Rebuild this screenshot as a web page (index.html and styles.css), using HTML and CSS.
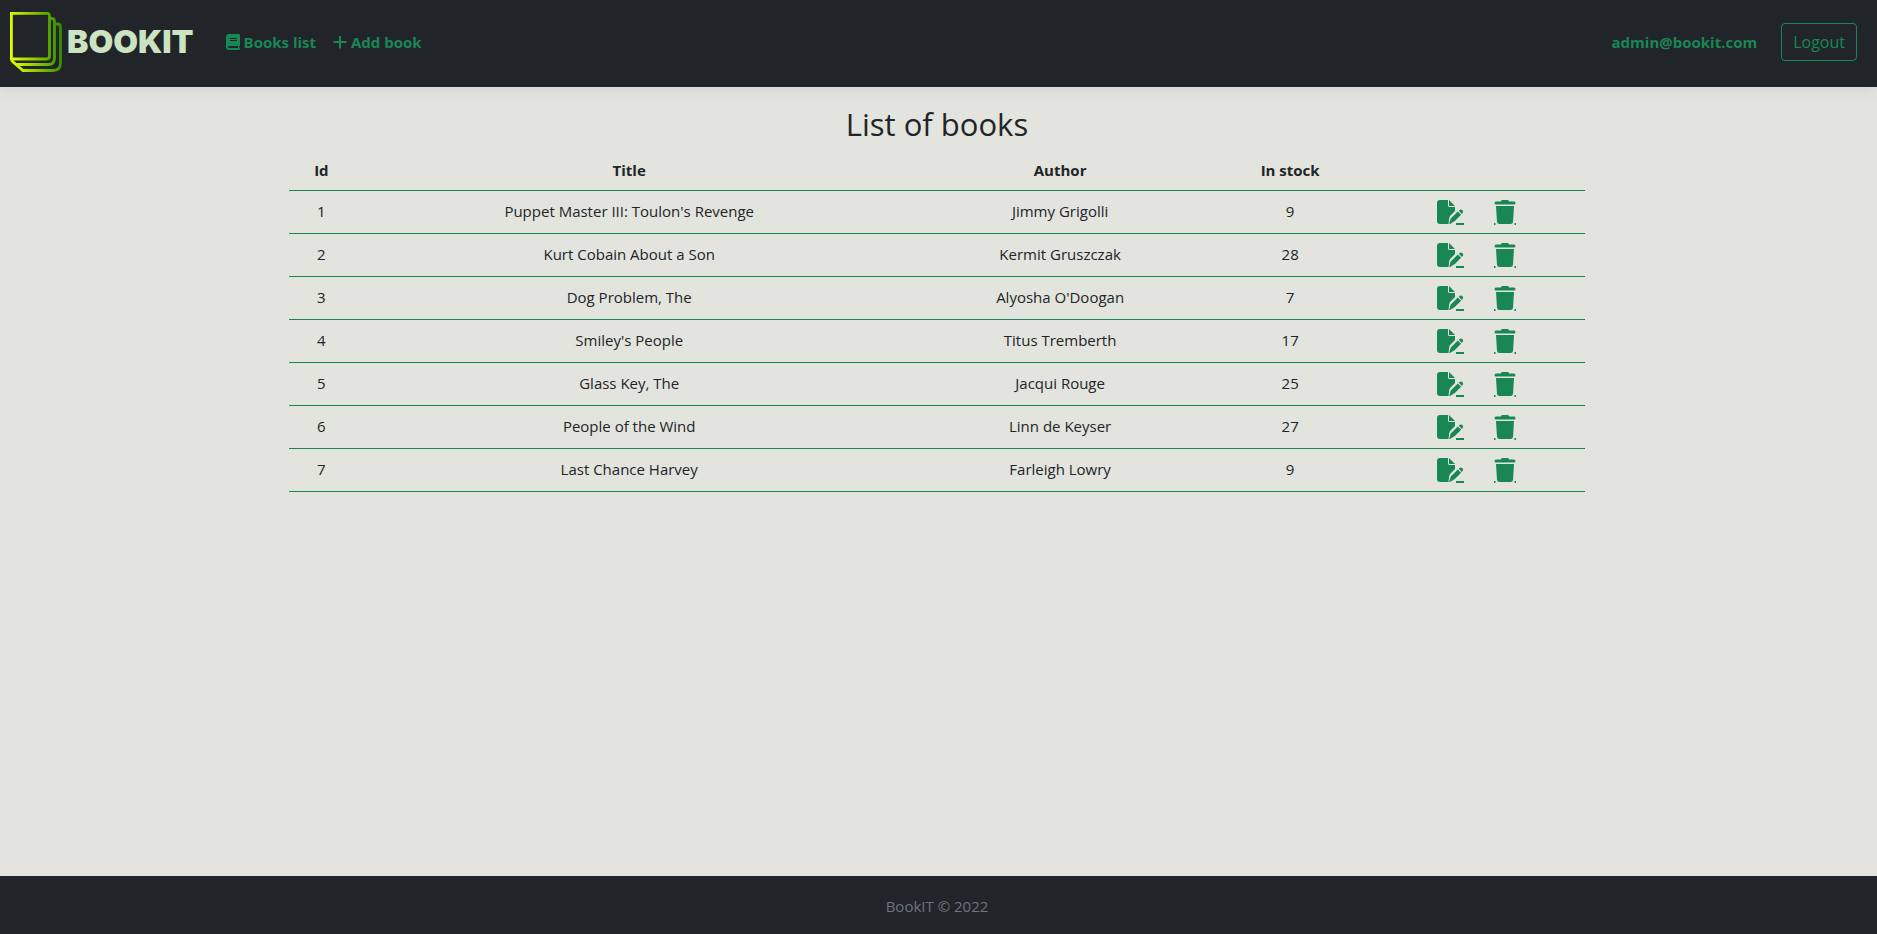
FILE: index.html
```html
<!DOCTYPE html>
<html lang="en">
<head>
<meta charset="utf-8">
<title>BookIT</title>
<link rel="stylesheet" href="styles.css">
</head>
<body>
<svg class="sprite" aria-hidden="true">
  <symbol id="icon-edit" viewBox="0 0 28 25">
    <path d="M3 0h8v5.500q0 1.500 1.500 1.500H18v4l-4.500 4.500q-1 1-1.300 2.500L11.500 24H3q-3 0-3-3V3q0-3 3-3z"/>
    <path d="M12 0l6 6h-6z"/>
    <path d="M14.800 17.500l6-6 3.300 3.300-6 6q-.5.500-1.200.700L13 23.900q-.9.300-.7-.7l1.400-4.500q.3-.8 1.100-1.200z M21.800 10.800l.8-.7q1.500-1.200 2.900.1 1.400 1.500.1 2.900l-.7.800z"/>
    <path d="M19 23h8v2h-8z"/>
  </symbol>
  <symbol id="icon-trash" viewBox="0 0 22 25">
    <path d="M7 1.200Q7.500 0 8.500 0h5q1 0 1.500 1.200l.3.300h4.700q1.500 0 1.500 1.500T20 4.500H2Q.5 4.500.5 3T2 1.500h4.700z"/>
    <path d="M2 6h18l-1 15.800Q18.800 24 16.600 24H5.400Q3.200 24 3 21.800z"/>
    <path d="M0 23h1.500v2H0zM20.500 23H22v2h-1.500z"/>
  </symbol>
</svg>
<header class="navbar">
  <a class="brand" href="#">
    <svg class="brand-mark" viewBox="0 0 52 60" aria-hidden="true">
      <defs>
        <linearGradient id="lime" gradientUnits="userSpaceOnUse" x1="0" y1="30" x2="52" y2="26">
          <stop offset="0" stop-color="#e4ff00"/>
          <stop offset="1" stop-color="#2e8b00"/>
        </linearGradient>
      </defs>
      <g fill="none" stroke="url(#lime)" stroke-width="2.800">
        <path d="M1.400 1.400H37q2.500 0 2.500 2.500V44q0 3-3 3H1.400z"/>
        <path d="M39.500 6.500h2q3 0 3 3V46q0 6.500-6 6.500H6"/>
        <path d="M45 12h2.500q3 0 3 3V51q0 7.500-7.500 7.500H13L1.400 48.500"/>
      </g>
    </svg>
    <span class="brand-name">BOOKIT</span>
  </a>
  <nav class="links">
    <a class="nav-link" href="#">
      <svg class="icon-book" viewBox="0 0 14 16" aria-hidden="true"><path fill-rule="evenodd" d="M3 0h10q1 0 1 1v10q0 .6-.6.900v2.100q.6 0 .6 1t-1 1H3q-3 0-3-3V3q0-3 3-3zM4 4v1h7V4zM4 6v1h7V6zM3 12q-1 0-1 1t1 1h9v-2z"/></svg>
      Books list</a>
    <a class="nav-link" href="#">
      <svg class="icon-plus" viewBox="0 0 14 16" aria-hidden="true"><path d="M6 2h2v5h5.500v2H8v5.500H6V9H.5V7H6z"/></svg>
      Add book</a>
  </nav>
  <div class="account">
    <a class="nav-link" href="#">admin@bookit.com</a>
    <button class="logout" type="button">Logout</button>
  </div>
</header>
<main class="page">
  <div class="container">
    <h1 class="heading">List of books</h1>
    <table class="books">
      <colgroup><col class="col-id"><col class="col-title"><col class="col-author"><col class="col-stock"><col class="col-actions"></colgroup>
      <thead>
        <tr><th scope="col">Id</th><th scope="col">Title</th><th scope="col">Author</th><th scope="col">In stock</th><td></td></tr>
      </thead>
      <tbody>
        <tr><td>1</td><td>Puppet Master III: Toulon's Revenge</td><td>Jimmy Grigolli</td><td>9</td><td><div class="actions"><a href="#" aria-label="Edit"><svg class="icon-edit"><use href="#icon-edit"/></svg></a><a href="#" aria-label="Delete"><svg class="icon-trash"><use href="#icon-trash"/></svg></a></div></td></tr>
        <tr><td>2</td><td>Kurt Cobain About a Son</td><td>Kermit Gruszczak</td><td>28</td><td><div class="actions"><a href="#" aria-label="Edit"><svg class="icon-edit"><use href="#icon-edit"/></svg></a><a href="#" aria-label="Delete"><svg class="icon-trash"><use href="#icon-trash"/></svg></a></div></td></tr>
        <tr><td>3</td><td>Dog Problem, The</td><td>Alyosha O'Doogan</td><td>7</td><td><div class="actions"><a href="#" aria-label="Edit"><svg class="icon-edit"><use href="#icon-edit"/></svg></a><a href="#" aria-label="Delete"><svg class="icon-trash"><use href="#icon-trash"/></svg></a></div></td></tr>
        <tr><td>4</td><td>Smiley's People</td><td>Titus Tremberth</td><td>17</td><td><div class="actions"><a href="#" aria-label="Edit"><svg class="icon-edit"><use href="#icon-edit"/></svg></a><a href="#" aria-label="Delete"><svg class="icon-trash"><use href="#icon-trash"/></svg></a></div></td></tr>
        <tr><td>5</td><td>Glass Key, The</td><td>Jacqui Rouge</td><td>25</td><td><div class="actions"><a href="#" aria-label="Edit"><svg class="icon-edit"><use href="#icon-edit"/></svg></a><a href="#" aria-label="Delete"><svg class="icon-trash"><use href="#icon-trash"/></svg></a></div></td></tr>
        <tr><td>6</td><td>People of the Wind</td><td>Linn de Keyser</td><td>27</td><td><div class="actions"><a href="#" aria-label="Edit"><svg class="icon-edit"><use href="#icon-edit"/></svg></a><a href="#" aria-label="Delete"><svg class="icon-trash"><use href="#icon-trash"/></svg></a></div></td></tr>
        <tr><td>7</td><td>Last Chance Harvey</td><td>Farleigh Lowry</td><td>9</td><td><div class="actions"><a href="#" aria-label="Edit"><svg class="icon-edit"><use href="#icon-edit"/></svg></a><a href="#" aria-label="Delete"><svg class="icon-trash"><use href="#icon-trash"/></svg></a></div></td></tr>
      </tbody>
    </table>
  </div>
</main>
<footer class="footer">BookIT © 2022</footer>
</body>
</html>
```
FILE: styles.css
```css
* { box-sizing: border-box; }
body {
  margin: 0;
  min-height: 100vh;
  display: flex;
  flex-direction: column;
  background: #e3e4dd;
  color: #212529;
  font: 15px/24px "Segoe UI", "Open Sans", "Noto Sans", sans-serif;
}
svg { display: block; fill: currentColor; overflow: visible; }
.sprite { display: none; }
.navbar {
  display: flex;
  align-items: center;
  padding: 12px 20px 15px 10px;
  background: #212529;
  box-shadow: 0 2px 16px rgba(0, 0, 0, 0.08);
}
.brand {
  display: flex;
  align-items: center;
  gap: 5px;
  color: #cbe3c0;
  text-decoration: none;
}
.brand-mark { width: 52px; height: 60px; }
.brand-name {
  font: 900 32px/44px Inter, sans-serif;
  min-width: 126px;
}
.links { display: flex; gap: 17px; margin-left: 32px; }
.nav-link {
  display: flex;
  align-items: center;
  gap: 4px;
  color: #198754;
  font-weight: 700;
  text-decoration: none;
}
.icon-book, .icon-plus { width: 14px; height: 16px; }
.account { display: flex; align-items: center; gap: 24px; margin-left: auto; }
.logout {
  padding: 6px 11px;
  border: 1px solid #198754;
  border-radius: 4px;
  background: transparent;
  color: #198754;
  font: inherit;
  font-size: 16px;
}
.page { flex: 1; padding-right: 3px; }
.container {
  max-width: 1320px;
  margin: 0 auto;
  padding: 18px 12px;
}
.heading {
  margin: 0 0 7px;
  font-size: 31px;
  font-weight: 500;
  line-height: 38px;
  text-align: center;
}
.books {
  width: 100%;
  border-collapse: collapse;
  table-layout: fixed;
  text-align: center;
}
.books th, .books td {
  padding: 8px;
  border-bottom: 1px solid #198754;
  vertical-align: top;
}
.books td:last-child { padding-left: 12px; }
.col-id { width: 5%; }
.col-title { width: 42.500%; }
.col-author { width: 24%; }
.col-stock { width: 11.500%; }
.col-actions { width: 17%; }
.actions { display: flex; justify-content: center; gap: 29px; padding-top: 1px; }
.actions a { display: block; color: #198754; }
.icon-edit { width: 28px; height: 25px; }
.icon-trash { width: 22px; height: 25px; }
.footer {
  padding: 18px 19px 16px 16px;
  background: #212529;
  color: #6c757d;
  text-align: center;
}
```
